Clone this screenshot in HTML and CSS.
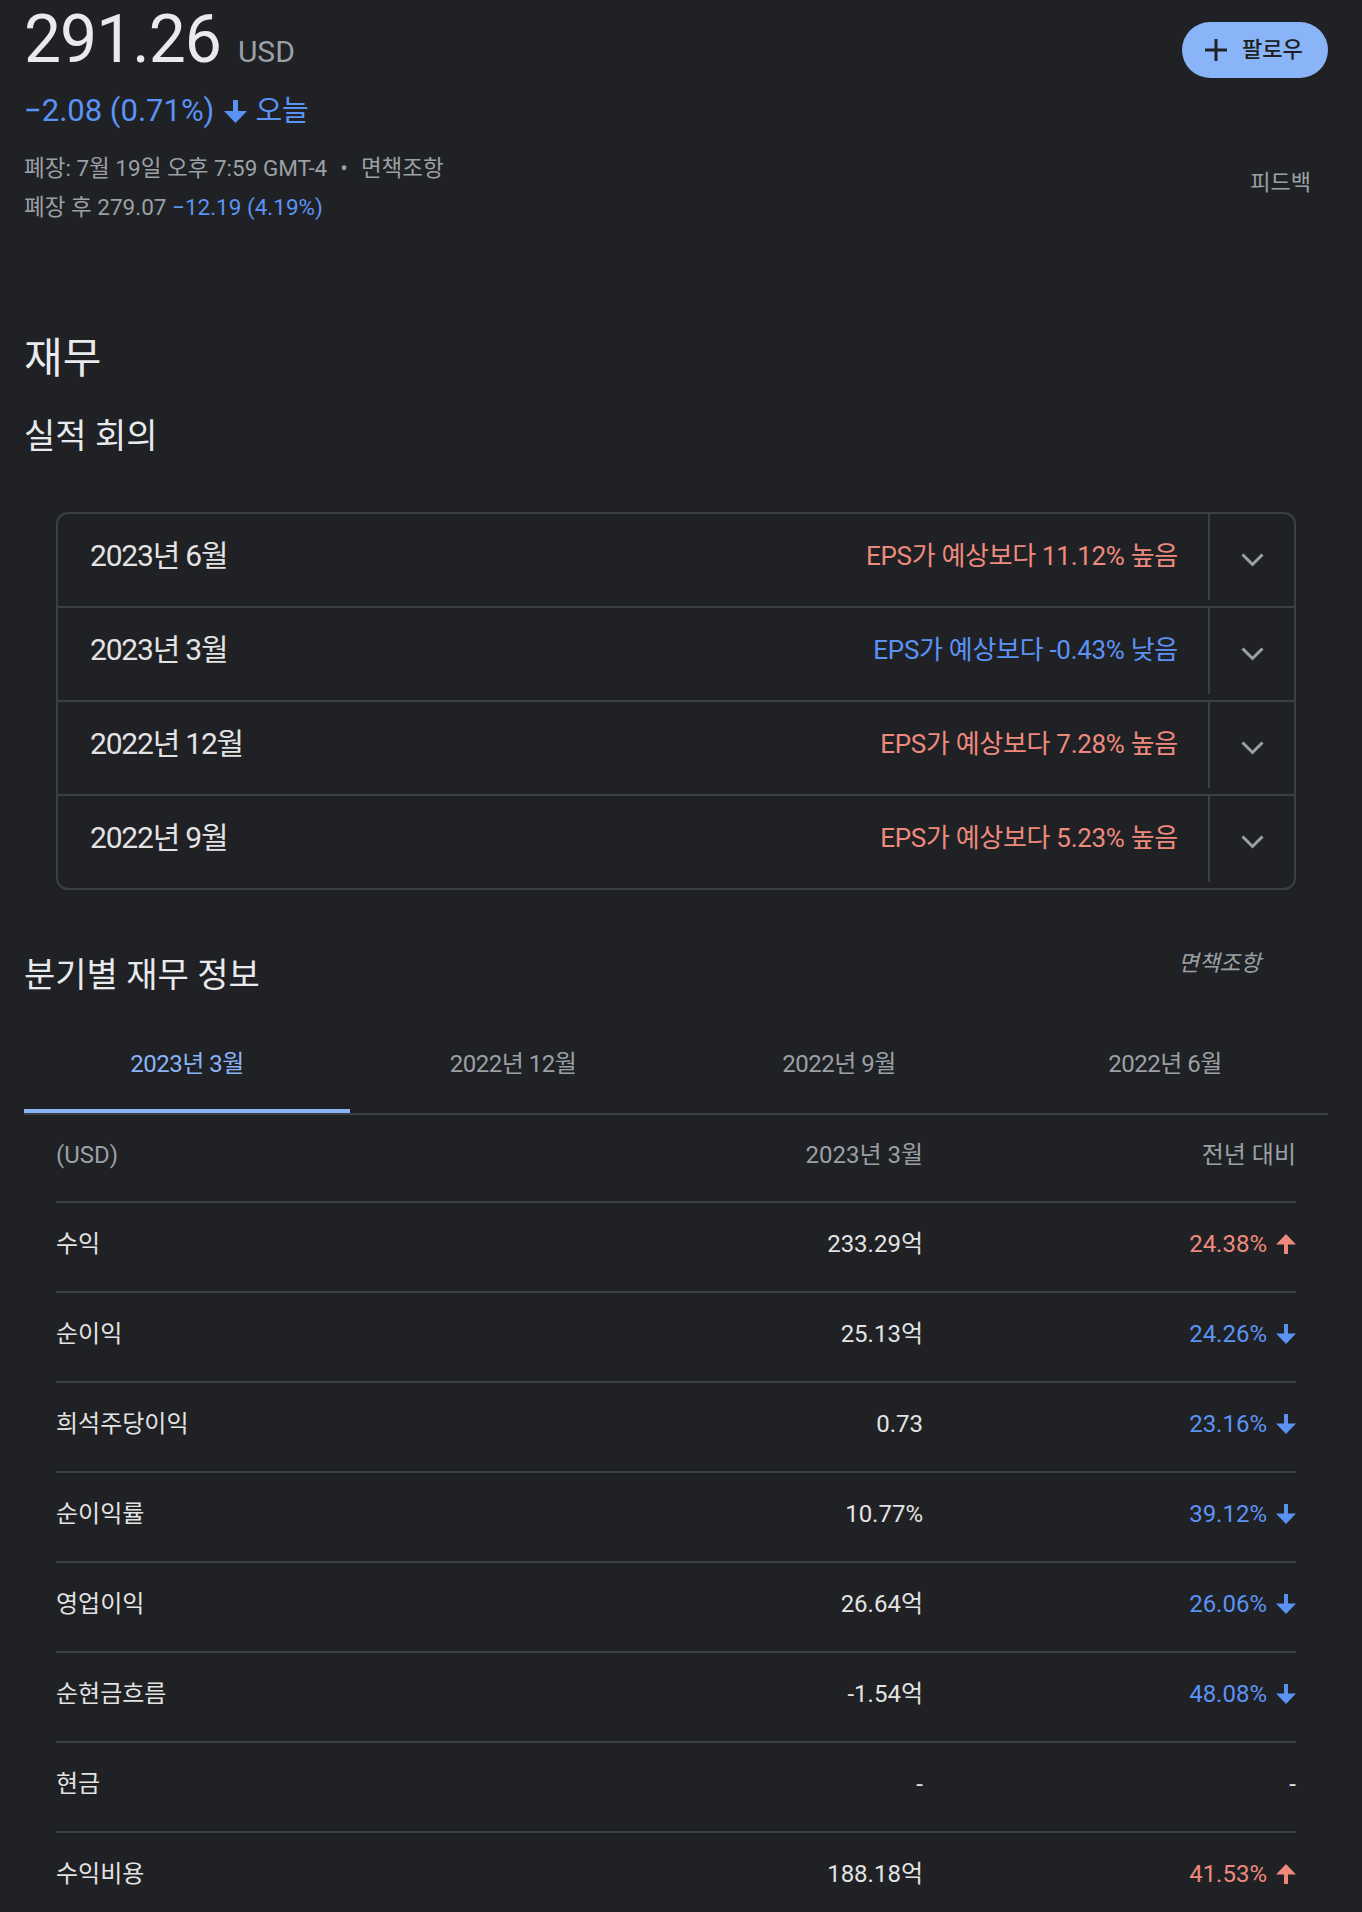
FILE: index.html
```html
<!DOCTYPE html>
<html lang="ko">
<head>
<meta charset="utf-8">
<title>재무</title>
<link rel="stylesheet" href="styles.css">
</head>
<body>
<div class="page">
  <header class="quote">
    <div class="quote-main">
      <div class="price-line"><span class="price">291.26</span><span class="currency">USD</span></div>
      <div class="change-line">
        <span class="change-text">−2.08 (0.71%)</span>
        <svg class="chg-arrow" viewBox="0 0 23 23" aria-hidden="true"><path d="M9 0h5v11h9L11.5 23 0 11h9z"/></svg>
        <span class="change-when">오늘</span>
      </div>
      <div class="meta meta-first">폐장: 7월 19일 오후 7:59 GMT-4<span class="dot">•</span>면책조항</div>
      <div class="meta">폐장 후 279.07 <span class="neg">−12.19 (4.19%)</span></div>
    </div>
    <div class="quote-side">
      <button class="follow" type="button">
        <svg class="plus" viewBox="0 0 22 22" aria-hidden="true"><path d="M9.5 0h3v22h-3z M0 9.5h22v3H0z"/></svg>
        <span>팔로우</span>
      </button>
      <div class="feedback">피드백</div>
    </div>
  </header>

  <section class="fin">
    <h2 class="fin-title">재무</h2>
    <h3 class="sub-title earn-title">실적 회의</h3>

    <div class="earnings">
      <div class="er-row">
        <div class="er-main"><span class="er-date">2023년 6월</span><span class="er-eps up">EPS가 예상보다 11.12% 높음</span></div>
        <div class="er-toggle"><svg class="chev" viewBox="0 0 23 14" aria-hidden="true"><polyline points="1.5,1.5 11.5,11.5 21.5,1.5"/></svg></div>
      </div>
      <div class="er-row">
        <div class="er-main"><span class="er-date">2023년 3월</span><span class="er-eps down">EPS가 예상보다 -0.43% 낮음</span></div>
        <div class="er-toggle"><svg class="chev" viewBox="0 0 23 14" aria-hidden="true"><polyline points="1.5,1.5 11.5,11.5 21.5,1.5"/></svg></div>
      </div>
      <div class="er-row">
        <div class="er-main"><span class="er-date">2022년 12월</span><span class="er-eps up">EPS가 예상보다 7.28% 높음</span></div>
        <div class="er-toggle"><svg class="chev" viewBox="0 0 23 14" aria-hidden="true"><polyline points="1.5,1.5 11.5,11.5 21.5,1.5"/></svg></div>
      </div>
      <div class="er-row">
        <div class="er-main"><span class="er-date">2022년 9월</span><span class="er-eps up">EPS가 예상보다 5.23% 높음</span></div>
        <div class="er-toggle"><svg class="chev" viewBox="0 0 23 14" aria-hidden="true"><polyline points="1.5,1.5 11.5,11.5 21.5,1.5"/></svg></div>
      </div>
    </div>

    <div class="qhead">
      <h3 class="sub-title">분기별 재무 정보</h3>
      <span class="disclaimer">면책조항</span>
    </div>

    <div class="tabs">
      <div class="tab active">2023년 3월</div>
      <div class="tab">2022년 12월</div>
      <div class="tab">2022년 9월</div>
      <div class="tab">2022년 6월</div>
    </div>

    <div class="fin-table">
      <div class="ft-row ft-head">
        <span class="ft-label">(USD)</span>
        <span class="ft-value">2023년 3월</span>
        <span class="ft-change">전년 대비</span>
      </div>
      <div class="ft-row">
        <span class="ft-label">수익</span>
        <span class="ft-value">233.29억</span>
        <span class="ft-change up">24.38%<svg class="yoy-arrow" viewBox="0 0 23 23" aria-hidden="true"><path d="M9.25 23h4.5V12h9.25L11.5 0 0 12h9.25z"/></svg></span>
      </div>
      <div class="ft-row">
        <span class="ft-label">순이익</span>
        <span class="ft-value">25.13억</span>
        <span class="ft-change down">24.26%<svg class="yoy-arrow" viewBox="0 0 23 23" aria-hidden="true"><path d="M9.25 0h4.5v11h9.25L11.5 23 0 11h9.25z"/></svg></span>
      </div>
      <div class="ft-row">
        <span class="ft-label">희석주당이익</span>
        <span class="ft-value">0.73</span>
        <span class="ft-change down">23.16%<svg class="yoy-arrow" viewBox="0 0 23 23" aria-hidden="true"><path d="M9.25 0h4.5v11h9.25L11.5 23 0 11h9.25z"/></svg></span>
      </div>
      <div class="ft-row">
        <span class="ft-label">순이익률</span>
        <span class="ft-value">10.77%</span>
        <span class="ft-change down">39.12%<svg class="yoy-arrow" viewBox="0 0 23 23" aria-hidden="true"><path d="M9.25 0h4.5v11h9.25L11.5 23 0 11h9.25z"/></svg></span>
      </div>
      <div class="ft-row">
        <span class="ft-label">영업이익</span>
        <span class="ft-value">26.64억</span>
        <span class="ft-change down">26.06%<svg class="yoy-arrow" viewBox="0 0 23 23" aria-hidden="true"><path d="M9.25 0h4.5v11h9.25L11.5 23 0 11h9.25z"/></svg></span>
      </div>
      <div class="ft-row">
        <span class="ft-label">순현금흐름</span>
        <span class="ft-value">-1.54억</span>
        <span class="ft-change down">48.08%<svg class="yoy-arrow" viewBox="0 0 23 23" aria-hidden="true"><path d="M9.25 0h4.5v11h9.25L11.5 23 0 11h9.25z"/></svg></span>
      </div>
      <div class="ft-row">
        <span class="ft-label">현금</span>
        <span class="ft-value">-</span>
        <span class="ft-change">-</span>
      </div>
      <div class="ft-row">
        <span class="ft-label">수익비용</span>
        <span class="ft-value">188.18억</span>
        <span class="ft-change up">41.53%<svg class="yoy-arrow" viewBox="0 0 23 23" aria-hidden="true"><path d="M9.25 23h4.5V12h9.25L11.5 0 0 12h9.25z"/></svg></span>
      </div>
    </div>
  </section>
</div>
</body>
</html>
```

FILE: styles.css
```css
* { box-sizing: border-box; }

html, body {
  margin: 0;
  padding: 0;
  background: #202124;
  overflow: hidden;
}

body {
  font-family: Roboto, "Noto Sans CJK KR", sans-serif;
  color: #e8eaed;
}

.page {
  padding: 0 34px 0 24px;
}

/* ---------- quote header ---------- */
.quote {
  display: flex;
  justify-content: space-between;
  align-items: flex-start;
}

.price-line {
  height: 80px;
  line-height: 80px;
  white-space: nowrap;
}

.price {
  font-size: 66px;
  letter-spacing: -1px;
  color: #e8eaed;
}

.currency {
  font-size: 30px;
  line-height: 1;
  color: #9aa0a6;
  margin-left: 17px;
}

.change-line {
  margin-top: 11px;
  height: 40px;
  display: flex;
  align-items: center;
  font-size: 31px;
  line-height: 40px;
  color: #5b93f5;
}

.change-when {
  font-size: 29px;
}

.chg-arrow {
  width: 23px;
  height: 23px;
  flex: none;
  fill: #5b93f5;
  margin: 0 8px 0 10px;
}

.meta {
  font-size: 22.5px;
  line-height: 39px;
  color: #9aa0a6;
  white-space: nowrap;
}

.meta-first {
  margin-top: 18px;
}

.dot {
  margin: 0 13px;
}

.neg {
  color: #5b93f5;
}

.quote-side {
  display: flex;
  flex-direction: column;
  align-items: flex-end;
  padding-top: 22px;
}

.follow {
  display: inline-flex;
  align-items: center;
  gap: 15px;
  width: 146px;
  height: 56px;
  padding: 0 0 0 23px;
  border: 0;
  border-radius: 28px;
  background: #8ab4f8;
  color: #202124;
  font-family: Roboto, "Noto Sans CJK KR", sans-serif;
  font-size: 22px;
  font-weight: 500;
  line-height: 30px;
}

.plus {
  width: 22px;
  height: 22px;
  flex: none;
  fill: #202124;
}

.feedback {
  margin-top: 90px;
  margin-right: 17px;
  font-size: 22px;
  line-height: 30px;
  color: #9aa0a6;
}

/* ---------- financials ---------- */
.fin-title {
  margin: 104px 0 0;
  font-size: 42px;
  line-height: 56px;
  font-weight: 400;
  color: #e8eaed;
}

.sub-title {
  margin: 0;
  font-size: 34px;
  line-height: 46px;
  font-weight: 400;
  color: #e8eaed;
}

.earn-title {
  margin-top: 26px;
}

.earnings {
  margin: 53px 32px 0;
  border: 2px solid #3c4043;
  border-radius: 12px;
}

.er-row {
  display: flex;
  height: 94px;
  border-top: 2px solid #3c4043;
}

.er-row:first-child {
  height: 92px;
  border-top: 0;
}

.er-main {
  flex: 1;
  display: flex;
  justify-content: space-between;
  align-items: flex-start;
  padding: 22px 30px 0 32px;
}

.er-date {
  font-size: 30px;
  letter-spacing: -1.2px;
  line-height: 40px;
  color: #e3e3e3;
}

.er-eps {
  font-size: 26px;
  letter-spacing: -0.3px;
  line-height: 40px;
}

.up { color: #ee8a7d; }
.down { color: #5b93f5; }

.er-toggle {
  width: 86px;
  display: flex;
  align-items: center;
  justify-content: center;
  padding-left: 2px;
  background: linear-gradient(#3c4043, #3c4043) 0 0 / 2px calc(100% - 6px) no-repeat;
}

.chev {
  width: 23px;
  height: 14px;
  fill: none;
  stroke: #9aa0a6;
  stroke-width: 3;
}

.qhead {
  margin-top: 58px;
  display: flex;
  justify-content: space-between;
  align-items: flex-start;
}

.qhead .sub-title {
  margin-top: 4px;
}

.disclaimer {
  margin-right: 67px;
  font-size: 22.5px;
  line-height: 30px;
  font-style: italic;
  color: #9aa0a6;
}

.tabs {
  margin-top: 48px;
  display: grid;
  grid-template-columns: repeat(4, 1fr);
  border-bottom: 2px solid #3c4043;
}

.tab {
  text-align: center;
  font-size: 24px;
  letter-spacing: -0.5px;
  line-height: 36px;
  padding-bottom: 27px;
  border-bottom: 4px solid transparent;
  color: #9aa0a6;
}

.tab.active {
  color: #8ab4f8;
  border-bottom-color: #8ab4f8;
}

.fin-table {
  margin: 0 32px;
}

.ft-row {
  display: grid;
  grid-template-columns: 1fr auto 373px;
  align-items: center;
  height: 90px;
  padding-bottom: 6px;
  border-bottom: 2px solid #3c4043;
  font-size: 24px;
  line-height: 36px;
  color: #e3e3e3;
}

.ft-head {
  height: 88px;
  color: #9aa0a6;
}

.ft-value {
  text-align: right;
}

.ft-change {
  display: flex;
  justify-content: flex-end;
  align-items: center;
}

.yoy-arrow {
  width: 20px;
  height: 20px;
  flex: none;
  margin-left: 9px;
  fill: currentColor;
}
```
